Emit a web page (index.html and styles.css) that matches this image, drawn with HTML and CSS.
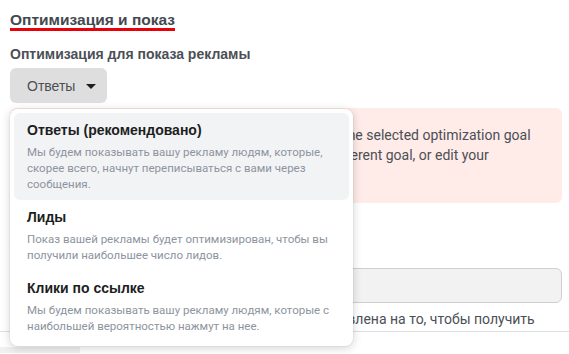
FILE: index.html
```html
<!DOCTYPE html>
<html lang="ru">
<head>
  <meta charset="UTF-8" />
  <meta name="viewport" content="width=device-width, initial-scale=1" />
  <title>Оптимизация и показ</title>
  <link rel="stylesheet" href="styles.css">
</head>
<body>
  <div class="page">
    <div class="content">
      <h2 class="title">Оптимизация и показ</h2>
      <div class="label">Оптимизация для показа рекламы</div>

      <div class="picker">
        <button class="select">Ответы <span class="caret"></span></button>

        <!-- открытый список вариантов -->
        <div class="menu">
          <div class="item active">
            <div class="item-title">Ответы (рекомендовано)</div>
            <div class="item-desc">Мы будем показывать вашу рекламу людям, которые, скорее всего, начнут переписываться с вами через сообщения.</div>
          </div>
          <div class="item">
            <div class="item-title">Лиды</div>
            <div class="item-desc">Показ вашей рекламы будет оптимизирован, чтобы вы получили наибольшее число лидов.</div>
          </div>
          <div class="item">
            <div class="item-title">Клики по ссылке</div>
            <div class="item-desc">Мы будем показывать вашу рекламу людям, которые с наибольшей вероятностью нажмут на нее.</div>
          </div>
        </div>
      </div>

      <div class="alert">
        Your ad set may not be able to get many results with the selected optimization goal<br>
        (Replies) at this moment. Please, try and choose a different goal, or edit your<br>
        audience.
      </div>

      <div class="field-label">Стоимость за результат</div>
      <div class="field"></div>
      <div class="hint">Сумма ставки для группы объявлений будет направлена на то, чтобы получить<br>наибольшее число результатов по наиболее выгодной цене.</div>
    </div>

    <div class="footer">
      <span class="footer-btn"></span>
    </div>
  </div>
</body>
</html>
```

FILE: styles.css
```css
body {
  margin: 0;
  font-family: Roboto, Arial, sans-serif;
  background-color: #fff;
  color: #1c1e21;
}
.page {
  height: 354px;
  display: flex;
  flex-direction: column;
  overflow: hidden;
}
.content {
  flex: 1;
  min-height: 0;
  padding: 10px 7px 0 10px;
}
.title {
  display: inline-block;
  margin: 0;
  font-family: "Liberation Sans", Arial, sans-serif;
  font-size: 15.5px;
  line-height: 16px;
  font-weight: bold;
  color: #444950;
  border-bottom: 3px solid #e8000b;
}
.label {
  margin-top: 15px;
  font-family: "Liberation Sans", Arial, sans-serif;
  font-size: 14px;
  font-weight: bold;
  line-height: 16px;
  color: #4b4f56;
}
.picker {
  position: relative;
  margin-top: 6px;
  height: 35px;
}
.select {
  height: 35px;
  width: 97px;
  padding: 0 0 0 17px;
  display: flex;
  align-items: center;
  gap: 11px;
  font-family: "Liberation Sans", Arial, sans-serif;
  font-size: 14px;
  color: #4b4f56;
  background-color: #dedede;
  border: none;
  border-radius: 6px;
}
.caret {
  width: 0;
  height: 0;
  border-left: 5px solid transparent;
  border-right: 5px solid transparent;
  border-top: 5px solid #1c1e21;
  margin-top: 1px;
}
.menu {
  position: absolute;
  top: 41px;
  left: 0;
  width: 335px;
  padding: 4px;
  background-color: #fff;
  border-radius: 8px;
  box-shadow: 0 2px 10px rgba(0,0,0,0.18), 0 0 0 1px rgba(0,0,0,0.03);
  z-index: 2;
}
.item {
  padding: 8px 13px;
  border-radius: 6px;
}
.item.active {
  background-color: #f2f3f5;
}
.item-title {
  font-family: "Liberation Sans", Arial, sans-serif;
  font-size: 14px;
  font-weight: bold;
  line-height: 18px;
  color: #1c1e21;
}
.item-desc {
  margin-top: 5px;
  font-size: 11.5px;
  line-height: 16px;
  color: #8d949e;
}
.alert {
  margin-top: 5px;
  height: 95px;
  box-sizing: border-box;
  padding: 17px 16px 0 5px;
  background-color: #ffebe8;
  border-radius: 6px;
  font-size: 14px;
  line-height: 20px;
  color: #4b4f56;
  white-space: nowrap;
  overflow: hidden;
}
.field-label {
  margin-top: 36px;
  font-size: 13px;
  font-weight: bold;
  line-height: 18px;
  color: #4b4f56;
}
.field {
  margin-top: 11px;
  height: 35px;
  box-sizing: border-box;
  background-color: #f2f2f2;
  border: 1px solid #ccd0d5;
  border-radius: 6px;
}
.hint {
  margin-top: 7px;
  font-size: 14px;
  line-height: 18px;
  color: #4b4f56;
  white-space: nowrap;
}
.footer {
  position: relative;
  z-index: 1;
  height: 22px;
  border-top: 1px solid #dddfe2;
  background-color: #fff;
}
.footer-btn {
  display: block;
  width: 80px;
  height: 6px;
  margin-top: 15px;
  background-color: #f0f0f0;
}
```
